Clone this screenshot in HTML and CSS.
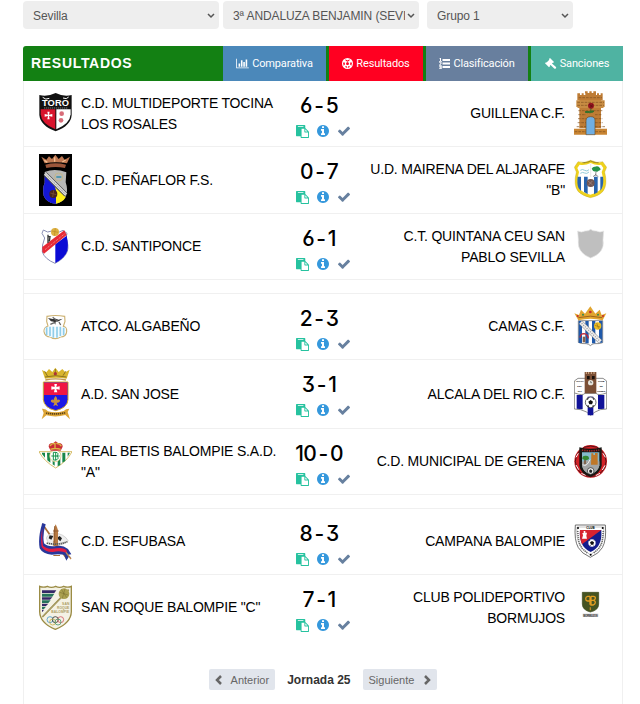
FILE: index.html
```
<!DOCTYPE html>
<html lang="es">
<head>
    <meta charset="UTF-8">
    <meta name="viewport" content="width=device-width, initial-scale=1.0">
    <title>Resultados</title>
    <link rel="stylesheet" href="styles.css">
</head>
<body>

    <svg class="sprite">
        <symbol id="paste" viewBox="0 0 1792 1792"><path d="M768 1664h896v-640h-416q-40 0-68-28t-28-68v-416h-384v1152zm256-1440v-64q0-13-9.5-22.5t-22.5-9.5h-704q-13 0-22.5 9.5t-9.5 22.5v64q0 13 9.5 22.5t22.5 9.5h704q13 0 22.5-9.5t9.5-22.5zm256 672h299l-299-299v299zm512 128v672q0 40-28 68t-68 28h-960q-40 0-68-28t-28-68v-160h-544q-40 0-68-28t-28-68v-1344q0-40 28-68t68-28h1088q40 0 68 28t28 68v328q21 13 36 28l408 408q28 28 48 76t20 88z"/></symbol>
        <symbol id="info" viewBox="128 128 1536 1536"><path d="M1152 1376v-160q0-14-9-23t-23-9h-96v-512q0-14-9-23t-23-9h-320q-14 0-23 9t-9 23v160q0 14 9 23t23 9h96v320h-96q-14 0-23 9t-9 23v160q0 14 9 23t23 9h448q14 0 23-9t9-23zm-128-896v-160q0-14-9-23t-23-9h-192q-14 0-23 9t-9 23v160q0 14 9 23t23 9h192q14 0 23-9t9-23zm640 416q0 209-103 385.5t-279.5 279.5-385.5 103-385.5-103-279.5-279.5-103-385.5 103-385.5 279.5-279.5 385.5-103 385.5 103 279.5 279.5 103 385.5z"/></symbol>
        <symbol id="check" viewBox="121 128 1550 1536"><path d="M1671 566q0 40-28 68l-724 724-136 136q-28 28-68 28t-68-28l-136-136-362-362q-28-28-28-68t28-68l136-136q28-28 68-28t68 28l294 295 656-657q28-28 68-28t68 28l136 136q28 28 28 68z"/></symbol>
        <symbol id="arrow" viewBox="0 0 8 6"><path d="M1 1l3 3 3-3" fill="none" stroke="#555" stroke-width="1.5"/></symbol>
    </svg>

    <div class="filters">
        <div class="select wide">
            <select><option>Sevilla</option></select>
            <svg><use href="#arrow"/></svg>
        </div>
        <div class="select wide">
            <select><option>3ª ANDALUZA BENJAMIN (SEVILLA)</option></select>
            <svg><use href="#arrow"/></svg>
        </div>
        <div class="select group">
            <select><option>Grupo 1</option></select>
            <svg><use href="#arrow"/></svg>
        </div>
    </div>

    <div class="header">
        <h1>RESULTADOS</h1>
        <a class="tab comparativa">
            <svg width="13" height="11" viewBox="0 0 2048 1792"><path d="M640 896v512h-256v-512h256zm384-512v1024h-256v-1024h256zm1024 1152v128h-2048v-1536h128v1408h1920zm-640-896v768h-256v-768h256zm384-384v1152h-256v-1152h256z"/></svg>
            <span>Comparativa</span>
        </a>
        <a class="tab resultados">
            <svg width="11" height="11" viewBox="0 0 22 22"><circle cx="11" cy="11" r="11"/><path class="cut" d="M11 8l3 2.200-1 3.600H9l-1-3.600zM6.500 2.500L11 5l4.500-2.500-1 3L11 7.500 7.500 5.500zM2 9.500l3-1 1 4-2.500 3zM20 9.500l-3-1-1 4 2.500 3zM6.500 16l3 .500 1 3-3-.500zM15.500 16l-3 .500-1 3 3-.500z"/></svg>
            <span>Resultados</span>
        </a>
        <a class="tab clasificacion">
            <svg width="11" height="11" viewBox="0 0 11 11"><path d="M3.500 1H11v2H3.500zM3.500 4.500H11v2H3.500zM3.500 8H11v2H3.500zM1 0h1v3h1v.700H0V3h1V1H.300zM.200 4.200h2.300v1.600L1.200 7h1.500v.700H.100V7l1.300-1.500V5H.200zM.200 8h2.500v3H.100v-.700h1.600v-.500H.600v-.700h1.100v-.400H.200z"/></svg>
            <span>Clasificación</span>
        </a>
        <a class="tab sanciones">
            <svg width="12" height="11" viewBox="0 0 12 11"><path d="M5 0l4 4-1 1-.500-.300L7 5.500 11 9q.600 1-.300 1.500T9.200 10.500L5.600 7l-.800.700.200.600-1 1L0 5.300l1-1 .600.200L4.300 1.700 4 1z"/></svg>
            <span>Sanciones</span>
        </a>
    </div>

    <div class="results">

        <div class="match">
            <svg class="crest" height="51" viewBox="57 24 99 153">
                <path d="M58 45q24 6 49-6 24 12 48 6v60q-2 32-48 49-46-17-49-49z" fill="#111"/>
                <path d="M62 88h44v60q-42-17-44-45z" fill="#d8142c"/>
                <path d="M109 88h43v15q-2 28-43 45z" fill="#fff"/>
                <path d="M82 95h7l-2 9 10-2v8l-10-2 2 10h-7l2-10-10 2v-8l10 2z" fill="#fff"/>
                <circle cx="125" cy="101" r="7" fill="#d86c78"/><circle cx="123" cy="121" r="7" fill="#d86c78"/>
                <path d="M68 52q9 9 20 3M129 54q11 5 17-3" fill="none" stroke="#fff" stroke-width="3"/>
                <text x="66" y="78" class="toro" textLength="81">TORO</text>
                <path d="M72 84h70" stroke="#aaa" stroke-width="2" stroke-dasharray="4 2"/>
            </svg>
            <div class="team">C.D. MULTIDEPORTE TOCINA LOS ROSALES</div>
            <div class="center">
                <div class="score">6 - 5</div>
                <div class="actions"><svg class="paste"><use href="#paste"/></svg><svg class="info"><use href="#info"/></svg><svg class="check"><use href="#check"/></svg></div>
            </div>
            <div class="team away">GUILLENA C.F.</div>
            <svg class="crest" height="51" viewBox="402 24 99 153">
                <path d="M412 40h8v5h5v-5h6v5h5v-5h-1v-6h8v5h5v-5h7v5h5v-5h8v11h3v-5h6v5h5v-5h6v21h-5v84h-65V61h-6z" fill="#be7c35"/>
                <path d="M409 61h85v18l-5 5h-75l-5-5z" fill="#c88c43"/>
                <path d="M402 146h36v18h-36zM465 146h36v18h-36z" fill="#c98533"/>
                <path d="M415 92h72M415 104h23M465 104h22M414 116h24M465 116h23M413 128h25M465 128h24M410 140h28M465 140h30M412 67h80M412 76h80M416 53h70M404 155h34M466 155h33" stroke="#81501f" stroke-width="2" stroke-dasharray="8 3"/>
                <path d="M438 164v-42q0-12 14-12t13 12v42z" fill="#70aee2" stroke="#69491f" stroke-width="2"/>
                <path d="M454 82q-2 10-4 18m0-4q-10-4-15 0 7 4 15 0m0 0q8-6 12-2-5 5-12 2" fill="#34702a" stroke="#34702a" stroke-width="3"/>
                <circle cx="453" cy="77" r="9" fill="#97151f"/><path d="M448 73q5 7 11 1m-9 8q3-4 8-2" stroke="#4b0910" stroke-width="2" fill="none"/>
            </svg>
        </div>

        <div class="match">
            <svg class="crest" height="52" viewBox="57 222 99 156">
                <path d="M57 222h99v156H57z" fill="#000"/>
                <path d="M64 230l15 9 8-10 9 8 10-13 10 13 10-9 8 11 16-9-9 20q-31-7-67 0z" fill="#bf7953"/>
                <path d="M76 254q31-8 62 0l-3 10q-28-6-56 0z" fill="#9b563b"/>
                <path d="M73 241l9 6m22-15v13m23 1l10-6" stroke="#f3be91" stroke-width="4"/>
                <path d="M74 276q31-13 65 1l-2 30q7 20 2 39-8 20-32 25-28-3-36-24-4-24 3-38z" fill="#b8b8b6"/>
                <path d="M74 288l61 64q-8 16-29 19-27-3-35-24-4-24 3-38z" fill="#1417d5"/>
                <path d="M104 320l33 32q-8 15-29 19V330z" fill="#fff019"/>
                <path d="M75 281l63 63" stroke="#333" stroke-width="13"/><path d="M75 281l63 63" stroke="#ddd" stroke-width="9"/><path d="M78 284l58 58" stroke="#888" stroke-width="3" stroke-dasharray="3 2"/>
                <circle cx="116" cy="291" r="12" fill="none" stroke="#c7b773" stroke-width="2"/><path d="M109 291h15" stroke="#238bad" stroke-width="4"/>
                <circle cx="100" cy="342" r="12" fill="#4a2419"/><path d="M91 339l18 5m-8-13l-3 20" stroke="#84563a" stroke-width="2"/>
            </svg>
            <div class="team">C.D. PEÑAFLOR F.S.</div>
            <div class="center">
                <div class="score">0 - 7</div>
                <div class="actions"><svg class="paste"><use href="#paste"/></svg><svg class="info"><use href="#info"/></svg><svg class="check"><use href="#check"/></svg></div>
            </div>
            <div class="team away">U.D. MAIRENA DEL ALJARAFE "B"</div>
            <svg class="crest" height="52" viewBox="402 222 99 156">
                <path d="M414 245q18 6 38-4 20 10 36 4l12 17-6 14q10 40-6 59-12 13-37 18-24-6-36-18-16-19-6-59l-6-14z" fill="#efd21d" stroke="#b79d22"/>
                <path d="M419 254q17 3 33-5 16 8 31 5l7 10-5 12q9 31-3 52-8 10-31 16-23-6-31-16-12-21-3-52l-5-12z" fill="#fff"/>
                <path d="M413 290h10v43l-7-8q-6-13-3-35zM432 290h11v52l-11-6zM462 290h11v47l-11 6zM481 290h8q3 22-4 36l-4 6z" fill="#2864ad"/>
                <path d="M421 271q6-5 13 0t13-2M421 280q7-5 13-1t13-3" stroke="#91cbd9" stroke-width="3" fill="none"/>
                <path d="M452 251v40" stroke="#bbb"/><path d="M468 273l-1 14m-8 3l8-6 8 6" stroke="#555" stroke-width="2" fill="none"/>
                <path d="M455 266q4-7 10-6 8-4 14 3 7 6-3 9-4 5-9 2-8 2-12-8" fill="#239349"/>
                <circle cx="452" cy="309" r="12" fill="#705653"/><path d="M444 303l14 12m-13 1l12-13" stroke="#a58d86" stroke-width="2"/>
                <path d="M428 248q12 1 24-5 12 6 24 5" stroke="#766827" stroke-width="3" stroke-dasharray="3 1" fill="none"/>
            </svg>
        </div>

        <div class="match">
            <svg class="crest" height="51" viewBox="57 423 99 153">
                <path d="M70 450l13 6q11-6 22 1 14 1 24-6l12 9-3 13q9 24 4 41-9 22-37 36-31-13-38-34-2-21 7-42l-8-14z" fill="#fff" stroke="#8a8fb5" stroke-width="3"/>
                <path d="M106 493l34-26q6 25 2 45-8 23-36 37z" fill="#0b0bd5"/>
                <path d="M67 515v-14l66-50 7 14-68 56z" fill="#e72936"/><path d="M75 509l58-47" stroke="#f4959b" stroke-width="3" stroke-dasharray="3 3"/>
                <circle cx="105" cy="456" r="12" fill="#ddb142"/><path d="M96 453l18 4m-8-12l-3 22" stroke="#b98923" stroke-width="2"/>
                <path d="M84 464v25m0-19h6l-2 14" stroke="#333" stroke-width="4" fill="none"/>
            </svg>
            <div class="team">C.D. SANTIPONCE</div>
            <div class="center">
                <div class="score">6 - 1</div>
                <div class="actions"><svg class="paste"><use href="#paste"/></svg><svg class="info"><use href="#info"/></svg><svg class="check"><use href="#check"/></svg></div>
            </div>
            <div class="team away">C.T. QUINTANA CEU SAN PABLO SEVILLA</div>
            <svg class="crest" height="51" viewBox="402 423 99 153">
                <path d="M413 453q11 6 22 0 11 1 17-5 6 6 17 5 11 6 22 0l-2 27q7 38-37 54-42-16-37-54z" fill="#bfbfbf" stroke="#e4e4e4" stroke-width="2"/>
            </svg>
        </div>

        <div class="separator"></div>

        <div class="match">
            <svg class="crest" height="51" viewBox="57 33 99 153">
                <path d="M81 79q25-5 53 0l1 15-5 15q11 3 10 15-1 16-19 17-7 5-14 5-10 0-15-5-18-1-20-17 0-12 12-16l-4-14z" fill="#fff" stroke="#cdb273" stroke-width="3.500"/>
                <path d="M75 114q16-7 31-4 18-3 31 4 3 15-6 22-12 6-24 8-14 0-26-8-10-8-6-22z" fill="#f2fbff"/>
                <path d="M80 112v24M90 110v28M100 110v33M111 110v33M121 110v28M131 113v23" stroke="#90cde9" stroke-width="5"/>
                <path d="M84 84l14 3q10-3 17 2l13-3-12 8-9 1-1 9-5-9-8-1z" fill="#333"/><path d="M98 82l15 12M91 103l14-6m12-1l5 9" stroke="#666" stroke-width="4"/>
            </svg>
            <div class="team">ATCO. ALGABEÑO</div>
            <div class="center">
                <div class="score">2 - 3</div>
                <div class="actions"><svg class="paste"><use href="#paste"/></svg><svg class="info"><use href="#info"/></svg><svg class="check"><use href="#check"/></svg></div>
            </div>
            <div class="team away">CAMAS C.F.</div>
            <svg class="crest" height="51" viewBox="402 33 99 153">
                <path d="M403 70l14 5 6-16 12 12 16-22 15 22 13-12 6 16 14-5-11 21q-36-9-73 0z" fill="#e1a52f"/>
                <path d="M415 83q36-9 72 0" stroke="#9e641b" stroke-width="3" fill="none"/><circle cx="451" cy="66" r="4" fill="#c52932"/><circle cx="429" cy="74" r="3" fill="#318653"/><circle cx="474" cy="74" r="3" fill="#318653"/><circle cx="413" cy="78" r="3" fill="#c52932"/><circle cx="489" cy="78" r="3" fill="#c52932"/>
                <path d="M415 92h73v66q-8 4-26 3-6 1-11 6-4-5-12-6-18 1-24-4z" fill="#fff" stroke="#555" stroke-width="2"/>
                <path d="M416 93h10v66h-10zM436 93h10v67h-10zM456 93h10v67h-10zM477 93h10v65h-10z" fill="#1f59aa"/>
                <path d="M422 97l59 58" stroke="#777" stroke-width="14"/><path d="M422 97l59 58" stroke="#eee" stroke-width="11"/><path d="M425 100l55 54" stroke="#999" stroke-width="4" stroke-dasharray="3 4"/>
                <circle cx="473" cy="108" r="11" fill="#e9bb24"/><path d="M464 106l16 5m-10-12l6 17" stroke="#987213" stroke-width="2"/>
                <path d="M420 143q1-12 12-12 11 1 13 14" stroke="#c02736" stroke-width="4" fill="none"/><path d="M428 140h8v17h-8z" fill="#87624b"/>
            </svg>
        </div>

        <div class="match">
            <svg class="crest" height="54" viewBox="57 231 99 162">
                <path d="M66 240l13 7 8-10 10 9 9-13 10 13 11-9 9 10 13-8-9 27q-31-5-65 0z" fill="#d9b62c"/>
                <path d="M75 261q32-8 64 0M74 244l9 15m23-22v20m23 0l8-13" stroke="#8d7421" stroke-width="3" fill="none"/><circle cx="106" cy="251" r="5" fill="#ad3536"/><path d="M76 270q31-7 62 0" stroke="#c2984d" stroke-width="4" fill="none"/>
                <path d="M70 276h74v53q-1 24-37 33-35-9-37-33z" fill="#1c18e5" stroke="#d5a92c" stroke-width="3"/><path d="M72 278h70v37H72z" fill="#f11643"/>
                <path d="M103 282h8l-2 9 10-2v10l-10-2 3 10h-10l2-10-10 2v-10l10 2z" fill="#fff"/>
                <path d="M107 318q9 12 2 17 5-10 11-4 1 6-6 7h-4l4 11-7-4-7 4 3-11h-5q-7-1-5-7 6-6 11 4-7-6 3-17" fill="#c8923d"/>
                <path d="M66 356q12-1 18 8 22 6 47-1 6-7 17-7l-5 10 7 22-14-13q-28 8-57 1l-14 12 6-19z" fill="#dda536"/>
                <path d="M78 369q29 6 58-1" stroke="#5b4216" stroke-width="5" stroke-dasharray="4 2" fill="none"/>
            </svg>
            <div class="team">A.D. SAN JOSE</div>
            <div class="center">
                <div class="score">3 - 1</div>
                <div class="actions"><svg class="paste"><use href="#paste"/></svg><svg class="info"><use href="#info"/></svg><svg class="check"><use href="#check"/></svg></div>
            </div>
            <div class="team away">ALCALA DEL RIO C.F.</div>
            <svg class="crest" height="54" viewBox="402 231 99 162">
                <path d="M403 273l11-8h75l11 8v84l-19 2q-18 6-29 17-11-12-30-17l-19-2z" fill="#fff" stroke="#555" stroke-width="2"/>
                <path d="M410 315h18v43l-18-2zM443 320h17v56h-17zM474 315h19v41l-19 2z" fill="#101298"/>
                <path d="M404 309q24 9 31 1h33q8 8 31-1" stroke="#555" stroke-width="2" fill="none"/>
                <path d="M434 246h35v64h-35z" fill="#7b4f35"/><path d="M439 246v6m7-6v6m8-6v6m8-6v6" stroke="#d6af8a" stroke-width="3"/><path d="M441 258h8v10h-8zM456 258h8v10h-8z" fill="#19100b"/>
                <circle cx="452" cy="278" r="8" fill="#e6e5dc"/><path d="M452 273v5h4" stroke="#555" stroke-width="2" fill="none"/>
                <g class="tiny"><text x="407" y="277" textLength="25">ALCALA</text><text x="412" y="292">DEL</text><text x="413" y="306">RIO</text><text x="474" y="277">CLUB</text><text x="479" y="292">DE</text><text x="472" y="306" textLength="25">FUTBOL</text></g>
                <circle cx="452" cy="337" r="16" fill="#fff" stroke="#222" stroke-width="2"/><path d="M452 330l7 5-3 8h-8l-3-8zM440 326l7-2-4 6zM464 326l-7-2 4 6zM440 347l6-1 1 6zM464 347l-6-1-1 6z" fill="#111"/>
            </svg>
        </div>

        <div class="match">
            <svg class="crest" height="51" viewBox="57 438 99 153">
                <path d="M57 485h99q-14 28-49 49-35-20-50-49z" fill="#fff" stroke="#d6be6b" stroke-width="3"/>
                <path d="M66 488h9v15l-9-11zM81 488h10v30l-9-7zM98 488h6v39l-6-4zM113 488h8v37l-8 4zM127 488h9v25l-9 5zM143 488h7l-7 12z" fill="#17874a"/>
                <circle cx="106" cy="498" r="17" fill="#fff" stroke="#d5c173" stroke-width="2"/><path d="M100 487v23h8q11-4 3-12 7-9-3-11zM94 498h25M107 487v24" stroke="#15934b" stroke-width="3" fill="none"/>
                <path d="M86 470q0-12 14-11l7-5 7 5q14-1 14 11l-6 12H92z" fill="#c92b37"/><path d="M90 468q4-8 15-8v15m4-15q12 1 15 9M91 478q16-5 31 0" stroke="#dcb646" stroke-width="4" fill="none"/>
            </svg>
            <div class="team">REAL BETIS BALOMPIE S.A.D. "A"</div>
            <div class="center">
                <div class="score">10 - 0</div>
                <div class="actions"><svg class="paste"><use href="#paste"/></svg><svg class="info"><use href="#info"/></svg><svg class="check"><use href="#check"/></svg></div>
            </div>
            <div class="team away">C.D. MUNICIPAL DE GERENA</div>
            <svg class="crest" height="51" viewBox="402 438 99 153">
                <circle cx="452" cy="514" r="49" fill="#d22026"/><circle cx="452" cy="514" r="46" fill="none" stroke="#551218" stroke-width="3"/>
                <path d="M416 478l15-9M408 502l7-12M408 525l8 14M424 550l13 6M496 502l-7-12M495 526l-8 14M480 550l-13 7M488 478l-15-9" stroke="#fff" stroke-width="3"/>
                <path d="M418 472q33 9 67 0v55q-4 24-34 33-30-9-33-33z" fill="#171713"/>
                <path d="M426 487h52v39q-3 18-27 27-22-8-25-27z" fill="#84bacb"/><path d="M426 515q26-8 52-1v13q-4 18-27 26-22-8-25-26z" fill="#a3a5a5"/>
                <path d="M454 490h6v5h5v-6h8v35h-20z" fill="#bf7728"/><path d="M435 507v15" stroke="#6e4724" stroke-width="4"/><path d="M427 507q-1-10 9-10 12-1 11 10-7 7-20 0" fill="#358831"/>
                <path d="M426 480q24 5 52 0" stroke="#a22625" stroke-width="5" stroke-dasharray="4 3" fill="none"/><path d="M428 524q11 9 22-15" stroke="#eee" stroke-width="3" fill="none"/>
                <circle cx="452" cy="543" r="10" fill="#eee" stroke="#222" stroke-width="2"/><path d="M452 538l5 4-2 6h-6l-2-6z" fill="#222"/>
            </svg>
        </div>

        <div class="separator"></div>

        <div class="match">
            <svg class="crest" height="51" viewBox="57 33 99 153">
                <path d="M67 57l74 105" stroke="#a96e39" stroke-width="5"/>
                <path d="M79 99q5-15 25-14 28 0 41 23-16 15-37 13-25 0-29-22z" fill="#eee" stroke="#999"/>
                <path d="M89 91l11 2-6 11-8-4zM110 99l9-6 7 7-5 9zM98 111l9-4 5 9z" fill="#222"/>
                <path d="M101 76l2-9 4-9 4 9 3 9v47h-14z" fill="#b87a42"/><path d="M99 78h18M104 63v50" stroke="#7b4d29" stroke-width="2"/>
                <path d="M67 54q-14 44-8 76 10 18 36 19 24-4 43 2l16-3-10-16q-16-13-35-9-26 4-37-8-5-25 5-57z" fill="#28379b"/>
                <path d="M67 70q-6 30-2 56 11 16 34 15 22-5 42 3l-2-9q-13-9-29-5-28 5-41-8-4-22-2-52z" fill="#e31d43"/>
                <path d="M137 143l17 15-9-1-6 10-6-16z" fill="#263a98"/><path d="M100 150h20v3h-20z" fill="#a96e39"/><path d="M138 142l15 20" stroke="#c58a4d" stroke-width="4"/>
                <path d="M80 114q32 8 62-4" stroke="#555" stroke-width="5" stroke-dasharray="4 2" fill="none"/>
            </svg>
            <div class="team">C.D. ESFUBASA</div>
            <div class="center">
                <div class="score">8 - 3</div>
                <div class="actions"><svg class="paste"><use href="#paste"/></svg><svg class="info"><use href="#info"/></svg><svg class="check"><use href="#check"/></svg></div>
            </div>
            <div class="team away">CAMPANA BALOMPIE</div>
            <svg class="crest" height="51" viewBox="402 33 99 153">
                <path d="M406 60h90q4 45-9 68-9 17-36 29-27-12-36-29-13-22-9-68z" fill="#fff" stroke="#555" stroke-width="2.500"/>
                <path d="M411 66h80q2 35-9 56-9 16-31 27-22-11-31-27-12-23-9-56z" fill="none" stroke="#888" stroke-width="1.500"/>
                <path d="M420 75h64q2 29-8 46-6 11-24 20-18-9-24-20-11-20-8-46z" fill="#131d8d"/><path d="M420 75h64l-58 43q-8-20-6-43z" fill="#d72330"/>
                <path d="M431 78h5v5h5l-2 9 2 9h-15l3-10-2-7h4z" fill="#fff"/>
                <circle cx="456" cy="114" r="11" fill="#fff"/><path d="M456 108l6 4-2 7h-7l-3-7zM447 106l4-1-2 4zM464 106l-3-2 1 4zM448 120l4 1-1 3zM463 121l-3 1v3z" fill="#111"/>
                <path d="M413 78l4 34 9 18 17 15M490 78l-4 34-9 18-17 15" fill="none" stroke="#666" stroke-width="5" stroke-dasharray="3 3"/><circle cx="414" cy="69" r="3"/><circle cx="488" cy="69" r="3"/><circle cx="452" cy="149" r="3"/>
                <text x="439" y="72" class="club" textLength="25">CLUB</text>
            </svg>
        </div>

        <div class="match last">
            <svg class="crest" height="51" viewBox="57 231 99 153">
                <path d="M59 244q12 5 23 0 12 6 25 0 12 6 24 0 12 5 23 0v76q-1 34-48 53-46-19-47-53z" fill="#f4f2e5" stroke="#9b8c45" stroke-width="4"/>
                <path d="M66 256h43l-6 8H66zM66 277h31l-7 7H66zM66 296h19l-7 7H66zM66 314h6l-4 6h-2z" fill="#352867"/><path d="M66 266h37l-6 9H66zM66 286h26l-7 8H66zM66 305h12l-6 7h-6z" fill="#26745b"/>
                <path d="M67 336l79-82" stroke="#8f8243" stroke-width="5"/><path d="M67 336l79-82" stroke="#eee2b0"/>
                <circle cx="132" cy="266" r="16" fill="#aba150"/><path d="M119 262l25 8m-20-17l16 25m-5-27l-8 29" stroke="#776c2f" stroke-width="1.500"/>
                <g class="roque"><text x="126" y="301" textLength="22">SAN</text><text x="111" y="312" textLength="37">ROQUE</text><text x="94" y="323" textLength="54">BALOMPIE</text></g>
                <g fill="none" stroke-width="2.500"><circle cx="90" cy="344" r="9" stroke="#499bca"/><circle cx="106" cy="344" r="9" stroke="#333"/><circle cx="122" cy="344" r="9" stroke="#d45b66"/><circle cx="98" cy="351" r="9" stroke="#c9af4a"/><circle cx="114" cy="351" r="9" stroke="#4c9872"/></g>
            </svg>
            <div class="team">SAN ROQUE BALOMPIE "C"</div>
            <div class="center">
                <div class="score">7 - 1</div>
                <div class="actions"><svg class="paste"><use href="#paste"/></svg><svg class="info"><use href="#info"/></svg><svg class="check"><use href="#check"/></svg></div>
            </div>
            <div class="team away">CLUB POLIDEPORTIVO BORMUJOS</div>
            <svg class="crest" height="51" viewBox="402 231 99 153">
                <path d="M427 262h49v35q0 19-25 24-24-6-24-24z" fill="#465421" stroke="#38451a" stroke-width="2"/>
                <path d="M450 274h-7q-6 1-6 7t6 7h7M450 299v-25M453 274h7q7 1 6 6t-6 6h-7M453 286h8q6 2 5 7t-6 7h-7v-26" fill="none" stroke="#e29d21" stroke-width="4"/><path d="M451 307v9" stroke="#bd8828" stroke-width="4"/>
                <path d="M428 326h47v9h-47z" fill="#ccc"/><text x="430" y="335" class="bormujos" textLength="43">BORMUJOS</text>
            </svg>
        </div>

        <div class="pager">
            <button class="prev"><svg width="7" height="10" viewBox="0 0 7 10"><path d="M6 1L2 5l4 4"/></svg>Anterior</button>
            <strong>Jornada 25</strong>
            <button class="next">Siguiente<svg width="7" height="10" viewBox="0 0 7 10"><path d="M1 1l4 4-4 4"/></svg></button>
        </div>
    </div>

</body>
</html>
```
FILE: styles.css
```
* {
    box-sizing: border-box;
}

body {
    font-family: "Liberation Sans", Arial, sans-serif;
    background-color: #fff;
    margin: 0;
    padding: 1px 17px 0 23px;
    height: 704px;
    overflow: hidden;
}

.sprite {
    display: none;
}

.filters {
    display: flex;
    margin-bottom: 17px;
}

.select {
    position: relative;
    height: 28px;
    margin-right: 4px;
}

.select.wide {
    width: 196px;
}

.select.group {
    width: 146px;
    margin-left: 4px;
}

select {
    appearance: none;
    width: 100%;
    height: 28px;
    padding: 2px 14px 0 10px;
    border: none;
    border-radius: 4px;
    background-color: #eee;
    color: #555;
    font-family: "Liberation Sans", Arial, sans-serif;
    font-size: 12px;
    letter-spacing: -0.1px;
}

.select svg {
    position: absolute;
    right: 4px;
    top: 12px;
    width: 8px;
    height: 6px;
}

.header {
    display: flex;
    gap: 3px;
    width: 600px;
    height: 35px;
    background-color: #138013;
    border-radius: 3px 0 0 0;
}

h1 {
    width: 197px;
    margin: 0;
    padding-left: 8px;
    color: #fff;
    font-size: 14px;
    line-height: 34px;
    letter-spacing: 0.7px;
}

.tab {
    display: flex;
    align-items: center;
    justify-content: center;
    gap: 3px;
    color: #fff;
    font-family: Roboto, sans-serif;
    font-size: 11px;
    letter-spacing: -0.15px;
}

.tab svg {
    fill: #fff;
}

.comparativa {
    width: 103px;
    background-color: #4b88ba;
}

.resultados {
    width: 94px;
    background-color: #ff0021;
}

.resultados .cut {
    fill: #ff0021;
}

.clasificacion {
    width: 102px;
    background-color: #687f9e;
}

.sanciones {
    width: 92px;
    background-color: #4fb3a2;
}

.results {
    width: 600px;
    height: 640px;
    border: 1px solid #f0f0f0;
    border-top: none;
}

.match {
    display: flex;
    align-items: center;
    padding: 7px 15px;
    border-bottom: 1px solid #f0f0f0;
}

.match.last {
    border-bottom: none;
}

.separator {
    height: 14px;
    border-bottom: 1px solid #f0f0f0;
}

.crest {
    display: block;
    flex: none;
    width: 33px;
}

.crest text {
    font-family: "Liberation Sans", Arial, sans-serif;
    font-weight: bold;
}

.toro {
    font-size: 28px;
    fill: #fff;
}

.tiny {
    font-size: 7px;
}

.club {
    font-size: 9px;
}

.roque {
    font-size: 10px;
    fill: #ac9d61;
}

.bormujos {
    font-size: 9px;
    fill: #444;
}

.team {
    width: 200px;
    margin-left: 9px;
    color: #000;
    font-size: 14px;
    line-height: 21px;
    letter-spacing: -0.19px;
}

.team.away {
    margin: 0 9px 0 0;
    text-align: right;
}

.center {
    flex: 1;
    align-self: flex-start;
    padding-top: 5px;
}

.score {
    height: 24px;
    margin-right: 8px;
    color: #000;
    font-family: Inter, sans-serif;
    font-size: 21px;
    font-weight: 500;
    line-height: 26px;
    letter-spacing: -0.7px;
    word-spacing: -2.5px;
    text-align: center;
    white-space: nowrap;
    font-feature-settings: "cv09", "ss01";
}

.actions {
    display: flex;
    align-items: center;
    justify-content: center;
    gap: 8px;
    height: 14px;
    margin-top: 7px;
}

.actions svg {
    width: 12px;
    height: 12px;
}

.actions .paste {
    width: 13px;
    height: 13px;
    fill: #26c29f;
}

.actions .info {
    fill: #3598dc;
}

.actions .check {
    margin-left: 1px;
    fill: #67809f;
}

.pager {
    display: flex;
    align-items: center;
    justify-content: center;
    gap: 12px;
    margin-top: 29px;
}

.pager strong {
    color: #333;
    font-size: 12px;
}

.pager button {
    display: flex;
    align-items: center;
    gap: 9px;
    height: 21px;
    padding: 0 6px;
    border: none;
    border-radius: 2px;
    background-color: #e1e5ec;
    color: #666;
    font-family: "Liberation Sans", Arial, sans-serif;
    font-size: 11px;
}

.pager .next {
    gap: 10px;
}

.pager path {
    fill: none;
    stroke: #666;
    stroke-width: 2.5;
}
```
